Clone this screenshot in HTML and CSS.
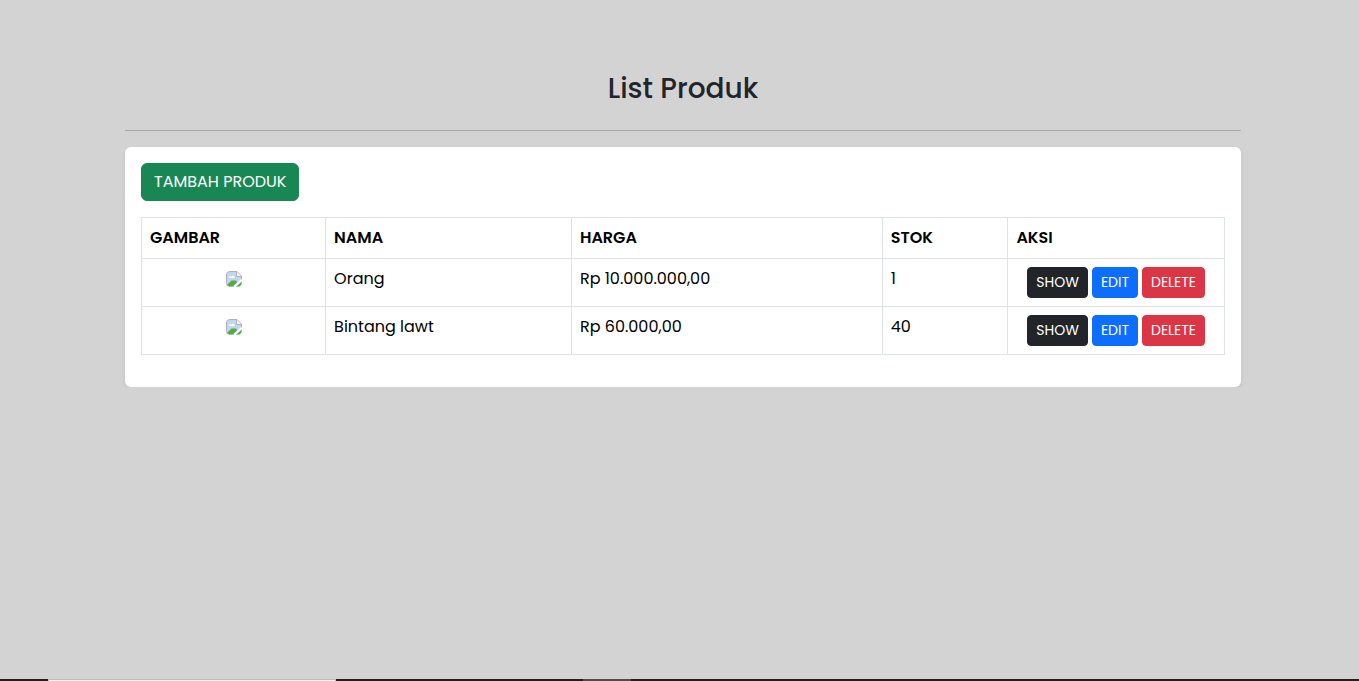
FILE: index.html
```html
<!DOCTYPE html>
<html lang="id">
<head>
<meta charset="utf-8">
<meta name="viewport" content="width=device-width, initial-scale=1">
<title>List Produk</title>
<link rel="stylesheet" href="styles.css">
</head>
<body>
<svg class="defs" aria-hidden="true">
  <symbol id="missing" viewBox="0 0 16 16">
    <path d="M1 1h9.500l4.500 4.500V8l-8 7H1z" fill="#c3d5f5"/>
    <path d="M3 7c0-2 2-2 2.500-1C6 4 9 4.500 8.500 7z" fill="#fff"/>
    <path d="M1 14 5.500 9.500l4 0 2 1.500-4 4H1z" fill="#53ae3f"/>
    <path d="M15 10v5H10z" fill="#53ae3f"/>
    <path d="M7.500 16 16 8v2L10 16z" fill="#fff"/>
    <path d="M10.500 1v4.500H15z" fill="#fff"/>
    <path d="M7.500 15.500H3a2.500 2.500 0 0 1-2.500-2.500V3A2.500 2.500 0 0 1 3 .5h8l4.500 4.500v3.500M10 15.500h3.500l2-2V10.500M10.500 .5V5.500h5" fill="none" stroke="#b0b3b8"/>
  </symbol>
</svg>
<main class="container">
  <h1 class="title">List Produk</h1>
  <hr class="rule">
  <section class="card">
    <a class="btn btn-success" href="#">TAMBAH PRODUK</a>
    <table class="table">
      <colgroup><col class="c-image"><col class="c-name"><col class="c-price"><col class="c-stock"><col></colgroup>
      <thead>
        <tr><th scope="col">GAMBAR</th><th scope="col">NAMA</th><th scope="col">HARGA</th><th scope="col">STOK</th><th scope="col">AKSI</th></tr>
      </thead>
      <tbody>
        <tr>
          <td class="center"><svg class="thumb" role="img" aria-label="Gambar"><use href="#missing"/></svg></td>
          <td>Orang</td><td>Rp 10.000.000,00</td><td>1</td>
          <td><form class="actions"><a class="btn btn-sm btn-dark" href="#">SHOW</a><a class="btn btn-sm btn-primary" href="#">EDIT</a><button class="btn btn-sm btn-danger" type="button">DELETE</button></form></td>
        </tr>
        <tr>
          <td class="center"><svg class="thumb" role="img" aria-label="Gambar"><use href="#missing"/></svg></td>
          <td>Bintang lawt</td><td>Rp 60.000,00</td><td>40</td>
          <td><form class="actions"><a class="btn btn-sm btn-dark" href="#">SHOW</a><a class="btn btn-sm btn-primary" href="#">EDIT</a><button class="btn btn-sm btn-danger" type="button">DELETE</button></form></td>
        </tr>
      </tbody>
    </table>
  </section>
</main>
<div class="taskbar"><span class="search"></span><span class="active-app"></span></div>
</body>
</html>
```
FILE: styles.css
```css
* { box-sizing: border-box; }
body {
  margin: 0;
  padding-left: 7px;
  background: #d3d3d3;
  color: #212529;
  font: 400 16px/24px Poppins, Inter, "Liberation Sans", sans-serif;
}
.defs { position: absolute; width: 0; height: 0; }
.container { max-width: 1140px; margin: 0 auto; padding: 72px 12px 0; }
.title { margin: 0 0 24px; font-size: 28px; line-height: 34px; font-weight: 500; text-align: center; }
.rule { margin: 0 0 16px; border: 0; border-top: 1px solid #a7a8a9; }
.card {
  padding: 16px 16px 32px;
  background: #fff;
  border-radius: 6px;
  box-shadow: 0 2px 4px rgba(0, 0, 0, .075);
}
.btn {
  display: inline-block;
  padding: 6px 12px;
  border: 1px solid transparent;
  border-radius: 6px;
  color: #fff;
  font: inherit;
  text-align: center;
  text-decoration: none;
  vertical-align: middle;
  white-space: nowrap;
}
.btn-success { background: #198754; border-color: #198754; }
.btn-sm { padding: 4px 8px; border-radius: 4px; font-size: 14px; line-height: 21px; }
.btn-dark { background: #212529; border-color: #212529; }
.btn-primary { background: #0d6efd; border-color: #0d6efd; }
.btn-danger { background: #dc3545; border-color: #dc3545; }
.table {
  width: 100%;
  margin-top: 16px;
  border-collapse: collapse;
  table-layout: fixed;
  color: #000;
}
.table th, .table td { padding: 8px; border: 1px solid #dee2e6; text-align: left; vertical-align: top; }
.table th { font-weight: 600; }
.table .center { text-align: center; }
.c-image { width: 17%; }
.c-name { width: 22.7%; }
.c-price { width: 28.7%; }
.c-stock { width: 11.6%; }
.thumb { display: block; width: 16px; height: 16px; margin: 4px auto 0; border-radius: 4px; }
.actions { display: flex; justify-content: center; gap: 4px; margin: 0; }
.taskbar { position: fixed; right: 0; bottom: 0; left: 0; display: flex; height: 2px; padding-left: 48px; background: #231f20; }
.search { width: 288px; border: 1px solid #bdbdbd; border-bottom: 0; background: #f2f2f2; }
.active-app { width: 48px; margin-left: 247px; background: #504c4d; }
```
